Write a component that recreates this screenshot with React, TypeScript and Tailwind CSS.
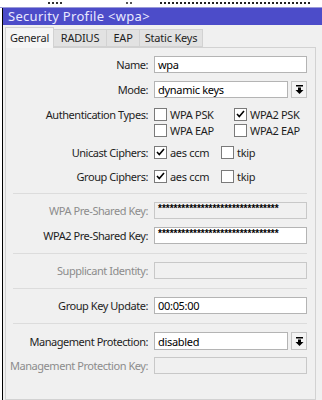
import type { ReactNode } from "react"

const font = { fontFamily: '"Noto Sans", "Open Sans", sans-serif' }

function DropIcon() {
    return (
        <svg width="9" height="9" viewBox="0 0 9 9">
            <rect x="1" y="0" width="7" height="1.5" fill="#000" />
            <path d="M3 2.5h3v2.5h2.5L4.5 9 0.5 5H3z" fill="#000" />
        </svg>
    )
}

function Label({ children, disabled }: { children: ReactNode; disabled?: boolean }) {
    return (
        <div
            className={`w-[148px] shrink-0 whitespace-nowrap pr-[6px] text-right text-[11px] leading-none tracking-[-0.45px] ${
                disabled ? "text-[#8c8c8c]" : "text-[#1e1e1e]"
            }`}
        >
            {children}
        </div>
    )
}

function Field({
    value,
    disabled,
    select,
    mono,
    h = "h-[17px]",
}: {
    value?: string
    disabled?: boolean
    select?: boolean
    mono?: boolean
    h?: string
}) {
    return (
        <div className={`flex ${h} w-[153px] shrink-0 gap-[3px]`}>
            <div
                className={`flex flex-1 items-center border px-[3px] text-[11px] leading-none tracking-[-0.3px] ${
                    disabled
                        ? "border-[#c8c8c8] bg-[#f0f0f0]"
                        : "border-[#b4b4b4] bg-white"
                }`}
            >
                {mono ? (
                    <span
                        className="-mt-[4px] text-[10px] font-bold tracking-[0px] text-black"
                        style={{ fontFamily: '"Liberation Sans", sans-serif' }}
                    >
                        {"*".repeat(31)}
                    </span>
                ) : (
                    <span className="text-black">{value}</span>
                )}
            </div>
            {select && (
                <div className="flex w-[16px] items-center justify-center border border-[#c4c4c4] bg-[#f4f4f4]">
                    <DropIcon />
                </div>
            )}
        </div>
    )
}

function Check({ label, checked, w }: { label: string; checked?: boolean; w: string }) {
    return (
        <div className={`flex ${w} items-center gap-[3px]`}>
            <div className="flex h-[13px] w-[13px] items-center justify-center border border-[#7a7a7a] bg-white">
                {checked && (
                    <svg width="9" height="8" viewBox="0 0 9 8">
                        <path d="M1 4l2.3 2.5L8 1" stroke="#000" strokeWidth="1.6" fill="none" />
                    </svg>
                )}
            </div>
            <span className="text-[11px] leading-none tracking-[-0.3px] text-[#1e1e1e]">{label}</span>
        </div>
    )
}

function Row({ children, className = "" }: { children: ReactNode; className?: string }) {
    return <div className={`flex items-center ${className}`}>{children}</div>
}

function Sep({ className = "" }: { className?: string }) {
    return <div className={`ml-[7px] mr-[8px] h-px bg-[#dcdcdc] ${className}`} />
}

function Tab({ children, w }: { children: ReactNode; w: string }) {
    return (
        <div
            className={`flex h-[18px] ${w} items-center justify-center border border-l-0 border-[#d2d2d2] bg-[#e2e2e2] text-[11px] tracking-[-0.2px] text-[#1e1e1e]`}
        >
            {children}
        </div>
    )
}

export default function App() {
    return (
        <div className="relative h-[400px] w-[322px] overflow-hidden bg-white" style={font}>
            <div className="flex h-[8px] items-start gap-[4px] border-b border-[#9a9ad8] bg-white pt-[2px]">
                <div className="ml-[48px] h-[2px] w-[14px] border-b-2 border-dotted border-[#333]" />
                <div className="ml-[60px] h-[2px] w-[6px] border-b-2 border-dotted border-[#555]" />
                <div className="ml-[24px] h-[2px] w-[150px] border-b-2 border-dotted border-[#222]" />
            </div>
            <div className="ml-[2px] flex h-[392px] flex-col border-l border-black">
                <div className="flex h-[17px] items-center bg-[#4c4cc9] pl-[5px] text-[13px] tracking-[0.3px] text-[#e8e8ff]">
                    Security Profile &lt;wpa&gt;
                </div>
                <div className="flex flex-1 flex-col bg-[#f0f0f0] pl-[2px] pt-[2px]">
                    <div className="flex items-end">
                        <div className="relative z-10 -mb-px flex h-[21px] w-[49px] items-center justify-center border border-b-0 border-[#d2d2d2] bg-[#f5f5f5] text-[11px] tracking-[-0.2px] text-[#1e1e1e]">
                            General
                        </div>
                        <Tab w="w-[53px]">RADIUS</Tab>
                        <Tab w="w-[33px]">EAP</Tab>
                        <Tab w="w-[63px]">Static Keys</Tab>
                    </div>
                    <div className="mr-[6px] flex flex-1 flex-col border border-[#d2d2d2] pt-[8px]">
                        <Row>
                            <Label>Name:</Label>
                            <Field value="wpa" />
                        </Row>
                        <Row className="mt-[8px]">
                            <Label>Mode:</Label>
                            <Field value="dynamic keys" select />
                        </Row>
                        <div className="mt-[8px] flex">
                            <div className="flex h-[16px] items-center">
                                <Label>Authentication Types:</Label>
                            </div>
                            <div className="flex flex-col">
                                <div className="flex h-[16px] items-center">
                                    <Check label="WPA PSK" w="w-[80px]" />
                                    <Check label="WPA2 PSK" checked w="w-[72px]" />
                                </div>
                                <div className="flex h-[16px] items-center">
                                    <Check label="WPA EAP" w="w-[80px]" />
                                    <Check label="WPA2 EAP" w="w-[72px]" />
                                </div>
                            </div>
                        </div>
                        <Row className="mt-[6px] h-[16px]">
                            <Label>Unicast Ciphers:</Label>
                            <Check label="aes ccm" checked w="w-[67px]" />
                            <Check label="tkip" w="w-[40px]" />
                        </Row>
                        <Row className="mt-[8px] h-[16px]">
                            <Label>Group Ciphers:</Label>
                            <Check label="aes ccm" checked w="w-[67px]" />
                            <Check label="tkip" w="w-[40px]" />
                        </Row>
                        <Sep className="mb-[8px] mt-[9px]" />
                        <Row>
                            <Label disabled>WPA Pre-Shared Key:</Label>
                            <Field disabled mono />
                        </Row>
                        <Row className="mt-[8px]">
                            <Label>WPA2 Pre-Shared Key:</Label>
                            <Field mono />
                        </Row>
                        <Sep className="mb-[8px] mt-[9px]" />
                        <Row>
                            <Label disabled>Supplicant Identity:</Label>
                            <Field disabled />
                        </Row>
                        <Sep className="mb-[8px] mt-[9px]" />
                        <Row>
                            <Label>Group Key Update:</Label>
                            <Field value="00:05:00" />
                        </Row>
                        <Sep className="mb-[8px] mt-[9px]" />
                        <Row>
                            <Label>Management Protection:</Label>
                            <Field value="disabled" select h="h-[18px]" />
                        </Row>
                        <Row className="mt-[7px]">
                            <Label disabled>Management Protection Key:</Label>
                            <Field disabled />
                        </Row>
                    </div>
                </div>
            </div>
        </div>
    )
}
